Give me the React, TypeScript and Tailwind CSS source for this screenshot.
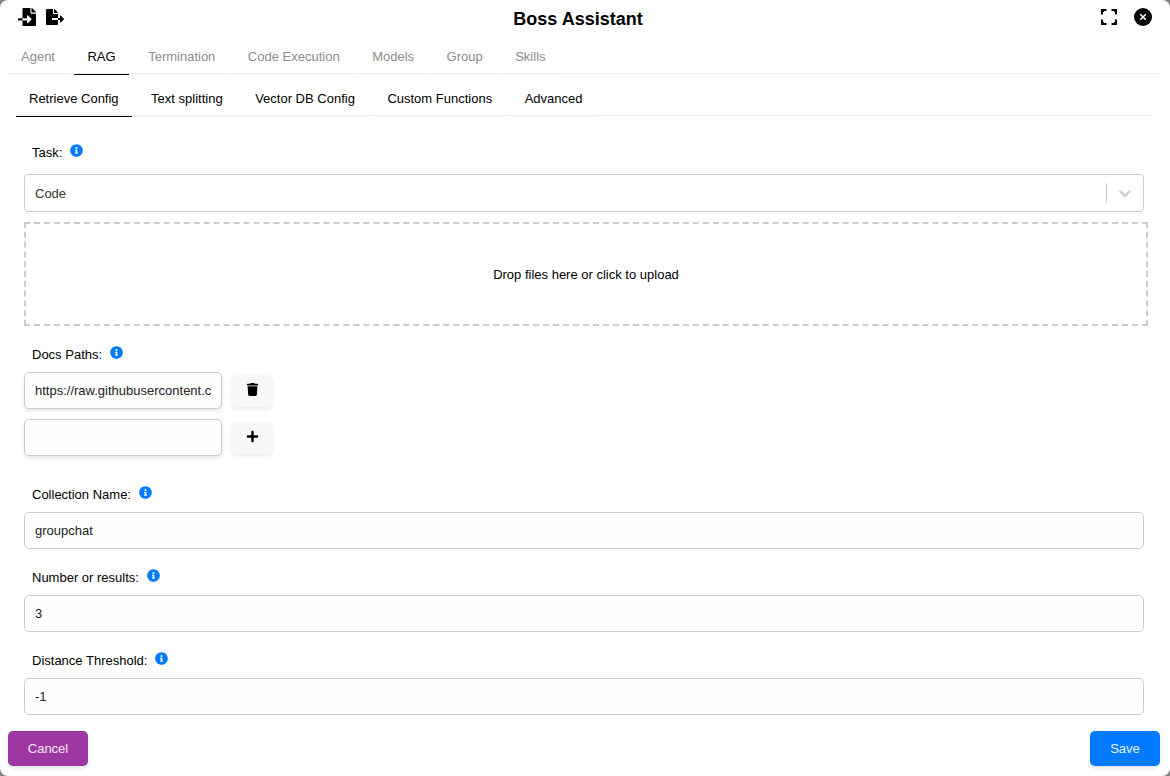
import type { ReactNode } from "react";
import { FaFileExport, FaFileImport, FaInfoCircle, FaPlus } from "react-icons/fa";
import { FaTrash } from "react-icons/fa6";

const mainTabs = ["Agent", "RAG", "Termination", "Code Execution", "Models", "Group", "Skills"];
const ragTabs = ["Retrieve Config", "Text splitting", "Vector DB Config", "Custom Functions", "Advanced"];

function Tabs({ items, active, dim }: { items: string[]; active: string; dim?: boolean }) {
  return (
    <div className="flex h-[34px] gap-[6.5px] border-b border-[#eeeeee]">
      {items.map((item) => (
        <button
          key={item}
          className={
            item === active
              ? "-mb-[2px] h-[35px] border-b border-black px-[13px] text-black"
              : dim
                ? "-mb-[2px] h-[35px] border-b-2 border-[#f1f1f1] px-[13px] text-[#8c8c8c]"
                : "-mb-[2px] h-[35px] border-b-2 border-[#f1f1f1] px-[13px] text-black"
          }
        >
          {item}
        </button>
      ))}
    </div>
  );
}

function Label({ children }: { children: ReactNode }) {
  return (
    <div className="flex h-[15px] items-start gap-2 pl-2 leading-[15px] text-black">
      <span>{children}</span>
      <FaInfoCircle size={13} className="-mt-px text-[#007bff]" />
    </div>
  );
}

function Field({ label, value }: { label: string; value: string }) {
  return (
    <div className="flex flex-col gap-[10px]">
      <Label>{label}</Label>
      <input
        defaultValue={value}
        className="h-[37px] w-full rounded-[5px] border border-[#cccccc] bg-[#fefefe] px-[10px] text-[#222222]"
      />
    </div>
  );
}

function PathRow({ value, icon }: { value: string; icon: ReactNode }) {
  return (
    <div className="flex items-center gap-[9px]">
      <input
        defaultValue={value}
        className="h-[37px] w-[198px] rounded-[5px] border border-[#cccccc] bg-[#fefefe] px-[10px] text-[#222222] shadow-[0_2px_4px_rgba(0,0,0,0.1)]"
      />
      <button className="flex h-[32px] w-[42px] items-center justify-center rounded-[6px] bg-[#f8f8f8] pb-[3px] text-black shadow-[0_2px_4px_rgba(0,0,0,0.08)]">
        {icon}
      </button>
    </div>
  );
}

export default function App() {
  return (
    <div className="h-[776px] w-[1170px] bg-[#858585] font-['Liberation_Sans',Arial,sans-serif] text-[13px]">
      <div className="flex h-full flex-col overflow-hidden rounded-[8px] bg-white">
        <header className="grid h-[40px] grid-cols-[1fr_auto_1fr] items-start pl-[18px] pr-[18px] pt-[8px]">
          <div className="flex items-center gap-[10px] text-black">
            <FaFileImport size={18} />
            <FaFileExport size={18} />
          </div>
          <h1 className="-ml-[14px] text-[18px] leading-[22px] font-bold text-black">Boss Assistant</h1>
          <div className="flex items-center justify-end gap-[17px]">
            <svg width="16" height="16" viewBox="0 0 16 16" fill="none" stroke="black" strokeWidth="2">
              <path d="M1 5.5V1H5.5M10.5 1H15V5.5M15 10.5V15H10.5M5.5 15H1V10.5" />
              <path d="M1.5 3.5L3.5 1.5M12.5 1.5L14.5 3.5M14.5 12.5L12.5 14.5M3.5 14.5L1.5 12.5" strokeWidth="1" />
            </svg>
            <svg width="18" height="18" viewBox="0 0 18 18">
              <circle cx="9" cy="9" r="9" fill="black" />
              <path d="M6.2 6.2L11.8 11.8M11.8 6.2L6.2 11.8" stroke="white" strokeWidth="1.6" />
            </svg>
          </div>
        </header>

        <nav className="pr-[10px] pl-2">
          <Tabs items={mainTabs} active="RAG" dim />
        </nav>
        <nav className="mt-[8px] pr-[18px] pl-4">
          <Tabs items={ragTabs} active="Retrieve Config" />
        </nav>

        <main className="flex flex-col pt-[29px] pr-[26px] pl-6">
          <Label>Task:</Label>
          <div className="mt-[14px] flex h-[38px] items-center rounded-[4px] border border-[#cccccc] bg-white pl-[10px]">
            <span className="flex-1 pt-px text-[#333333]">Code</span>
            <span className="h-5 w-px bg-[#cccccc]" />
            <svg width="20" height="20" viewBox="0 0 20 20" className="mx-2 text-[#cccccc]" fill="currentColor">
              <path d="M4.516 7.548c0.436-0.446 1.043-0.481 1.576 0l3.908 3.747 3.908-3.747c0.533-0.481 1.141-0.446 1.574 0 0.436 0.445 0.408 1.197 0 1.615-0.406 0.418-4.695 4.502-4.695 4.502-0.217 0.223-0.502 0.335-0.787 0.335s-0.57-0.112-0.789-0.335c0 0-4.287-4.084-4.695-4.502s-0.436-1.17 0-1.615z" />
            </svg>
          </div>
          <div className="mt-[10px] -mr-1 flex h-[104px] items-center justify-center border-2 border-dashed border-[#cccccc] pt-px text-black">
            Drop files here or click to upload
          </div>

          <div className="mt-[21px] flex flex-col gap-[10px]">
            <Label>Docs Paths:</Label>
            <PathRow value="https://raw.githubusercontent.c" icon={<FaTrash size={13} />} />
            <PathRow value="" icon={<FaPlus size={13} />} />
          </div>

          <div className="mt-[31px] flex flex-col gap-[21px]">
            <Field label="Collection Name:" value="groupchat" />
            <Field label="Number or results:" value="3" />
            <Field label="Distance Threshold:" value="-1" />
          </div>
        </main>

        <footer className="mt-[16px] flex justify-between pr-[10px] pl-2">
          <button className="h-[35px] w-[80px] rounded-[5px] bg-[#9d36a0] text-white/90 shadow-[0_2px_4px_rgba(0,0,0,0.12)]">Cancel</button>
          <button className="h-[35px] w-[70px] rounded-[5px] bg-[#007bff] text-white/90 shadow-[0_2px_4px_rgba(0,0,0,0.12)]">Save</button>
        </footer>
      </div>
    </div>
  );
}
